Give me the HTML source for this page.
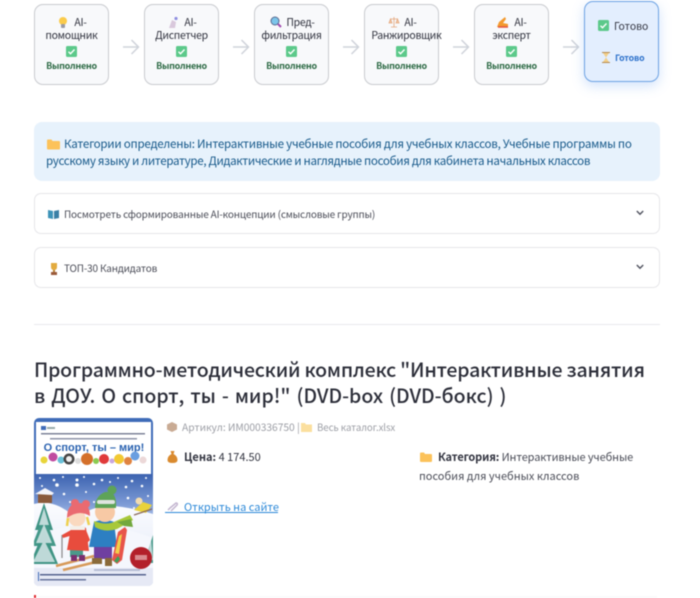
<!DOCTYPE html>
<html lang="ru"><head><meta charset="utf-8">
<style>
html,body{margin:0;padding:0;background:#fff;width:700px;height:598px;overflow:hidden}
body{position:relative;font-family:"Liberation Sans","Noto Sans CJK SC",sans-serif;color:#31333f}
#w{position:absolute;left:0;top:0;width:700px;height:598px;filter:blur(.4px);overflow:hidden}
.a,.t{position:absolute}
.t{white-space:nowrap}
.f{font-family:"Noto Sans CJK SC","Liberation Sans",sans-serif}
.card{position:absolute;top:4px;width:73px;height:79px;border:1.5px solid #c9cbcf;border-radius:9px;background:#f8f9fb}
.l{position:absolute;left:-10px;right:-10px;text-align:center;font-size:10.5px;letter-spacing:-.3px;line-height:13px;white-space:nowrap;color:#31333f}
.d{position:absolute;left:-10px;right:-10px;text-align:center;font-size:9px;letter-spacing:-.3px;font-weight:700;line-height:12px;color:#2e6b46;top:55px;white-space:nowrap}
.ck{position:absolute;left:31px;top:41px}
.arr{position:absolute;top:38px}
.exp{position:absolute;left:34px;width:624px;height:39px;border:1.5px solid #e6e6e9;border-radius:7px;background:#fff}
svg{display:block}
</style></head><body><div id="w">

<div class="card f" style="left:34px">
<svg class="a" style="left:23px;top:11px" width="10" height="13" viewBox="0 0 10 13"><circle cx="5" cy="5" r="4" fill="#fbcb4a"/><rect x="3" y="8" width="4" height="4" rx="1" fill="#9a9aa5"/></svg>
<div class="l" style="top:11px"><span style="padding-left:18px">AI-</span><br>помощник</div>
<svg class="ck" width="11" height="11"><rect width="11" height="11" rx="1.5" fill="#5cc98a"/><path d="M2.500 5.700l2 2 4-4.200" stroke="#fff" stroke-width="1.400" fill="none"/></svg>
<div class="d">Выполнено</div></div>

<svg class="arr" style="left:122px" width="18" height="18" viewBox="0 0 18 18"><path d="M1 9h15M9.500 2l7 7-7 7" fill="none" stroke="#cfd3da" stroke-width="1.500"/></svg>

<div class="card f" style="left:144px">
<svg class="a" style="left:23px;top:11px" width="11" height="13" viewBox="0 0 11 13"><path d="M1 12L4 4l4 2-1 6z" fill="#d9c8dc"/><circle cx="8" cy="2.500" r="1.600" fill="#8f8fe0"/></svg>
<div class="l" style="top:11px"><span style="padding-left:18px">AI-</span><br>Диспетчер</div>
<svg class="ck" width="11" height="11"><rect width="11" height="11" rx="1.5" fill="#5cc98a"/><path d="M2.500 5.700l2 2 4-4.200" stroke="#fff" stroke-width="1.400" fill="none"/></svg>
<div class="d">Выполнено</div></div>

<svg class="arr" style="left:232px" width="18" height="18" viewBox="0 0 18 18"><path d="M1 9h15M9.500 2l7 7-7 7" fill="none" stroke="#cfd3da" stroke-width="1.500"/></svg>

<div class="card f" style="left:254px">
<svg class="a" style="left:15px;top:11px" width="12" height="12" viewBox="0 0 12 12"><circle cx="5" cy="5" r="4" fill="#7cc5ea" stroke="#5a6a90"/><path d="M8 8l3 3" stroke="#a14bb0" stroke-width="2"/></svg>
<div class="l" style="top:11px"><span style="padding-left:18px">Пред-</span><br>фильтрация</div>
<svg class="ck" width="11" height="11"><rect width="11" height="11" rx="1.5" fill="#5cc98a"/><path d="M2.500 5.700l2 2 4-4.200" stroke="#fff" stroke-width="1.400" fill="none"/></svg>
<div class="d">Выполнено</div></div>

<svg class="arr" style="left:342px" width="18" height="18" viewBox="0 0 18 18"><path d="M1 9h15M9.500 2l7 7-7 7" fill="none" stroke="#cfd3da" stroke-width="1.500"/></svg>

<div class="card f" style="left:364px">
<svg class="a" style="left:23px;top:11px" width="12" height="13" viewBox="0 0 12 13"><path d="M6 1v10M2 3h8M1 7l1.500-4L4 7zM8 7l1.500-4L11 7zM3 11h6" fill="#f3c9a8" stroke="#e4a67c" stroke-width=".8"/></svg>
<div class="l" style="top:11px"><span style="padding-left:18px">AI-</span><br><span style="position:relative;left:5px">Ранжировщик</span></div>
<svg class="ck" width="11" height="11"><rect width="11" height="11" rx="1.5" fill="#5cc98a"/><path d="M2.500 5.700l2 2 4-4.200" stroke="#fff" stroke-width="1.400" fill="none"/></svg>
<div class="d">Выполнено</div></div>

<svg class="arr" style="left:452px" width="18" height="18" viewBox="0 0 18 18"><path d="M1 9h15M9.500 2l7 7-7 7" fill="none" stroke="#cfd3da" stroke-width="1.500"/></svg>

<div class="card f" style="left:474px">
<svg class="a" style="left:22px;top:11px" width="12" height="12" viewBox="0 0 12 12"><path d="M0 11l2-5 6-5 1 2-3 4 5 1v3z" fill="#f39a2e"/><path d="M1 11h10" stroke="#e5533d" stroke-width="1.500"/></svg>
<div class="l" style="top:11px"><span style="padding-left:18px">AI-</span><br>эксперт</div>
<svg class="ck" width="11" height="11"><rect width="11" height="11" rx="1.5" fill="#5cc98a"/><path d="M2.500 5.700l2 2 4-4.200" stroke="#fff" stroke-width="1.400" fill="none"/></svg>
<div class="d">Выполнено</div></div>

<svg class="arr" style="left:562px" width="18" height="18" viewBox="0 0 18 18"><path d="M1 9h15M9.500 2l7 7-7 7" fill="none" stroke="#cfd3da" stroke-width="1.500"/></svg>

<div class="card f" style="left:584px;top:1px;background:#e3eefe;border-color:#6ea3e4;box-shadow:0 4px 12px rgba(90,150,240,.28)">
<svg class="a" style="left:13px;top:18px" width="11" height="11"><rect width="11" height="11" rx="1.5" fill="#5cc98a"/><path d="M2.500 5.700l2 2 4-4.200" stroke="#fff" stroke-width="1.400" fill="none"/></svg>
<div class="t" style="left:29px;top:16px;font-size:10.400px;line-height:15px">Готово</div>
<svg class="a" style="left:17px;top:50px" width="8" height="11" viewBox="0 0 8 11"><path d="M0 .5h8M0 10.500h8" stroke="#b58a50"/><path d="M1 1h6L4 5.500 7 10H1l3-4.500z" fill="#f2cf8a"/></svg>
<div class="t" style="left:30px;top:49px;font-size:8.800px;letter-spacing:-.15px;font-weight:700;line-height:13px;color:#2f73cc">Готово</div>
</div>

<div class="a" style="left:34px;top:122px;width:626px;height:59px;background:#e7f2fc;border-radius:8px"></div>
<svg class="a" style="left:47px;top:139px" width="13" height="11" viewBox="0 0 13 11"><path d="M0 1.500Q0 .5 1 .5h3.500l1 1.500H12q1 0 1 1v6.500q0 1-1 1H1q-1 0-1-1z" fill="#fcc25a"/></svg>
<div class="t f" style="left:64px;top:135px;font-size:11.600px;letter-spacing:-.25px;line-height:18px;color:#17598a">Категории определены: Интерактивные учебные пособия для учебных классов, Учебные программы по</div>
<div class="t f" style="left:46px;top:152px;font-size:11.600px;letter-spacing:-.33px;line-height:18px;color:#17598a">русскому языку и литературе, Дидактические и наглядные пособия для кабинета начальных классов</div>

<div class="exp" style="top:193px"></div>
<svg class="a" style="left:48px;top:209px" width="11" height="10" viewBox="0 0 11 10"><path d="M0 1l5 1v8L0 9z" fill="#3d93b8"/><path d="M11 1L6 2v8l5-1z" fill="#3a7fa5"/></svg>
<div class="t f" style="left:64px;top:206px;font-size:10px;letter-spacing:-.17px;line-height:16px;color:#4a4c57">Посмотреть сформированные AI-концепции (смысловые группы)</div>
<svg class="a" style="left:636px;top:210px" width="8" height="6" viewBox="0 0 8 6"><path d="M.8 1l3.200 3.200L7.200 1" fill="none" stroke="#50525e" stroke-width="1.400"/></svg>

<div class="exp" style="top:247px"></div>
<svg class="a" style="left:49px;top:263px" width="10" height="12" viewBox="0 0 10 12"><path d="M2 0h6v4Q8 7 5 7T2 4z" fill="#e3ab3f"/><path d="M5 7v2" stroke="#b5823a" stroke-width="2"/><rect x="2" y="9" width="6" height="3" fill="#9a5a3a"/></svg>
<div class="t f" style="left:64px;top:260px;font-size:10px;letter-spacing:-.17px;line-height:16px;color:#4a4c57">ТОП-30 Кандидатов</div>
<svg class="a" style="left:636px;top:264px" width="8" height="6" viewBox="0 0 8 6"><path d="M.8 1l3.200 3.200L7.200 1" fill="none" stroke="#50525e" stroke-width="1.400"/></svg>

<div class="a" style="left:34px;top:324px;width:626px;height:1px;background:#e9e9ec"></div>

<div class="t f" style="left:34px;top:356px;font-size:19.500px;letter-spacing:-.2px;font-weight:500;line-height:26px;color:#2b2d38">Программно-методический комплекс "Интерактивные занятия</div>
<div class="t f" style="left:34px;top:382px;font-size:19.500px;word-spacing:1.600px;font-weight:500;line-height:26px;color:#2b2d38">в ДОУ. О спорт, ты - мир!" (DVD-box (DVD-бокс) )</div>

<svg class="a" style="left:34px;top:418px;filter:blur(.35px)" width="119" height="168" viewBox="0 0 119 168">
<defs>
<linearGradient id="sky" x1="0" y1="0" x2="0" y2="1"><stop offset="0" stop-color="#3c63b0"/><stop offset=".6" stop-color="#7d9bd6"/><stop offset="1" stop-color="#bccdee"/></linearGradient>
<linearGradient id="snow" x1="0" y1="0" x2="0" y2="1"><stop offset="0" stop-color="#fbfcff"/><stop offset="1" stop-color="#dfe6f6"/></linearGradient>
<clipPath id="cp"><rect width="119" height="168" rx="5"/></clipPath>
</defs>
<g clip-path="url(#cp)">
<rect width="119" height="168" fill="#3f6cb8"/>
<rect x="2" y="4" width="115" height="52" fill="#fff"/>
<rect x="0" y="56" width="119" height="50" fill="url(#sky)"/>
<path d="M0 86Q20 80 42 100Q62 86 80 88Q100 90 119 96V168H0z" fill="url(#snow)"/>
<path d="M20 112Q60 98 119 120V168H0V130z" fill="#f5f7fd"/>
<rect x="0" y="150" width="119" height="18" fill="#e6e9f5"/>
<rect x="7" y="8" width="5" height="4" fill="#3f6cb8"/><rect x="13" y="9" width="8" height="2" fill="#9aa"/>
<rect x="7" y="15" width="104" height="1.500" fill="#7e8398"/>
<rect x="16" y="20" width="87" height="1.500" fill="#8f94a8"/>
<text x="60" y="33" text-anchor="middle" font-family="Liberation Sans" font-size="11" font-weight="700" fill="#2a62b0">О спорт, ты – мир!</text>
<circle cx="10" cy="42" r="3.500" fill="#e8d53a"/><circle cx="19" cy="39" r="4.500" fill="#c04aa0"/><circle cx="27" cy="42" r="3.500" fill="#6ac0d8"/><circle cx="35" cy="41" r="5.500" fill="#444"/><circle cx="35" cy="41" r="3" fill="#eee"/><circle cx="44" cy="43" r="3" fill="#ddd"/><circle cx="53" cy="41" r="6" fill="#d4702a"/><circle cx="62" cy="43" r="3" fill="#8acb50"/><circle cx="70" cy="41" r="5" fill="#e03a3a"/><circle cx="78" cy="43" r="2.500" fill="#c9a7dd"/><circle cx="85" cy="41" r="5" fill="#f2c933"/><circle cx="94" cy="43" r="4" fill="#e08340"/><circle cx="101" cy="38" r="4.500" fill="#6a9ee0"/><circle cx="109" cy="42" r="3.500" fill="#ecd8d8"/>
<g fill="#fff"><circle cx="6" cy="60" r="1"/><circle cx="20" cy="62" r="1.300"/><circle cx="29" cy="59" r="1"/><circle cx="43" cy="62" r="1.500"/><circle cx="50" cy="59" r="1"/><circle cx="68" cy="62" r="1.300"/><circle cx="84" cy="60" r="1"/><circle cx="98" cy="63" r="1.300"/><circle cx="112" cy="60" r="1"/><circle cx="23" cy="67" r="1.800"/><circle cx="43" cy="67" r="1.800"/><circle cx="60" cy="66" r="1.300"/><circle cx="76" cy="64" r="1"/><circle cx="92" cy="69" r="1.300"/><circle cx="108" cy="68" r="1.300"/><circle cx="8" cy="68" r="1"/><circle cx="30" cy="76" r="1.300"/><circle cx="52" cy="74" r="1"/><circle cx="36" cy="84" r="1"/><circle cx="94" cy="80" r="1.300"/><circle cx="114" cy="78" r="1"/><circle cx="60" cy="84" r="1"/><circle cx="100" cy="90" r="1"/></g>
<!-- house -->
<rect x="4" y="76" width="14" height="9" fill="#8a5a3a"/><path d="M1 76l10-6 9 5-2 2z" fill="#f4f4f8"/>
<!-- left tree -->
<path d="M10 85L1 112h18z" fill="#3f9484"/><path d="M10 97L-2 128h24z" fill="#45998a"/><path d="M10 112L-4 146h28z" fill="#3f9484"/>
<path d="M10 90l-5 17h10zM10 106l-8 19h16zM10 122l-11 22h22z" fill="#f0f4f8" opacity=".72"/>
<!-- right tree -->
<path d="M119 117l-9 28h9z" fill="#4a9a8c"/><path d="M117 122l-5 20h7z" fill="#f0f4f8" opacity=".7"/>
<!-- sledder -->
<path d="M100 92l9-8 9 3-6 8z" fill="#e9d23a"/><circle cx="105" cy="83" r="3.500" fill="#f2dcb0"/><path d="M100 97l18-6" stroke="#8a6a5a" stroke-width="1.200"/>
<!-- skis girl -->
<path d="M22 148l38-10M29 152l33-8" stroke="#d79a5a" stroke-width="2.500"/>
<path d="M28 117v23" stroke="#888" stroke-width="1.200"/>
<!-- girl -->
<rect x="36" y="131" width="13" height="8" fill="#4a9a8a"/>
<rect x="37" y="137" width="6" height="6" fill="#7a2f70"/><rect x="45" y="137" width="6" height="6" fill="#7a2f70"/>
<path d="M37 110l-4 22 22 1-3-23q-7-4-15 0z" fill="#e84c3d"/><path d="M37 112l-9 5 1 3 10-3zM52 112l4 10-3 3-4-9z" fill="#e84c3d"/>
<circle cx="43" cy="100" r="8.500" fill="#fad9bf"/>
<path d="M33 100q0-15 12-15 11 0 11 13-11-7-23 2z" fill="#ea6a70"/>
<circle cx="41" cy="85" r="4" fill="#ea6a70"/><circle cx="52" cy="86" r="4" fill="#ea6a70"/>
<path d="M34 100l-1 8M53 99l2 8" stroke="#eed04f" stroke-width="2.500"/>
<path d="M36 108h15v4H36z" fill="#f4f0ea"/>
<!-- boy -->
<rect x="60" y="128" width="18" height="13" fill="#6f3fa0"/>
<rect x="58" y="140" width="10" height="6" fill="#8a6a3a"/><rect x="71" y="140" width="7" height="8" fill="#8a6a3a"/>
<path d="M60 104l-5 25h28l-3-25q-10-4-20 0z" fill="#2d7fc2"/>
<circle cx="71" cy="94" r="10" fill="#f7c9a5"/>
<path d="M61 90q0-12 10-16l6 0q6 4 5 16z" fill="#5ea358"/>
<circle cx="78" cy="72" r="4.500" fill="#5ea358"/>
<rect x="63" y="82" width="18" height="4" rx="2" fill="#dfe4e0"/>
<path d="M60 103q13 5 22 0l14-6 3 5-16 9q-12 4-22-2z" fill="#a8c83a"/><path d="M83 104l14-3 2 8-9-1z" fill="#72a83e"/>
<!-- board -->
<path d="M78 142l6-28 7-5 2 3-5 30-5 4z" fill="#e8544a"/><path d="M81 135l4-17 3-2-3 20z" fill="#f2d04a"/><path d="M80 143l4-5 2 3-3 4z" fill="#3fa05a"/>
<!-- badge -->
<circle cx="107" cy="140" r="11" fill="#b3202a"/><rect x="101" y="137" width="12" height="5" fill="#d98a8e"/>
<rect x="60" y="151" width="46" height="2" fill="#b6bdd4"/>
<rect x="4" y="154" width="1" height="9" fill="#3f6cb8"/>
<rect x="6" y="156" width="106" height="1.500" fill="#55628f"/><rect x="6" y="161" width="46" height="1.500" fill="#66729c"/>
</g>
</svg>

<svg class="a" style="left:167px;top:422px" width="10" height="10" viewBox="0 0 10 10"><path d="M5 0l5 2.500v5L5 10 0 7.500v-5z" fill="#c9ab94"/></svg>
<div class="t f" style="left:182px;top:419px;font-size:10.300px;letter-spacing:-.05px;line-height:16px;color:#9c9ea5">Артикул: ИМ000336750 | </div>
<svg class="a" style="left:301px;top:422px" width="11" height="10" viewBox="0 0 11 10"><path d="M0 1h4l1 1.500h6V10H0z" fill="#fbdf9e"/></svg>
<div class="t f" style="left:317px;top:419px;font-size:9.700px;letter-spacing:-.08px;line-height:16px;color:#9c9ea5">Весь каталог.xlsx</div>

<svg class="a" style="left:167px;top:451px" width="11" height="12" viewBox="0 0 11 12"><path d="M3.500 0h4L6.500 3q4 2 4 6 0 3-5 3t-5-3q0-4 4-6z" fill="#d98a2f"/></svg>
<div class="t f" style="left:184px;top:449px;font-size:11px;line-height:16px;color:#31333f"><b>Цена:</b> 4 174.50</div>

<svg class="a" style="left:420px;top:452px" width="12" height="10" viewBox="0 0 12 10"><path d="M0 1.500Q0 .5 1 .5h3l1 1.500h6q1 0 1 1V9q0 1-1 1H1q-1 0-1-1z" fill="#fcc25a"/></svg>
<div class="t f" style="left:438px;top:449px;font-size:11px;letter-spacing:-.12px;line-height:16px;color:#4a4c57"><b style="color:#31333f">Категория:</b> Интерактивные учебные</div>
<div class="t f" style="left:419px;top:468px;font-size:11px;line-height:16px;color:#4a4c57">пособия для учебных классов</div>

<svg class="a" style="left:166px;top:502px" width="13" height="10" viewBox="0 0 13 10"><path d="M2 8l3-3M5 9L11 3Q12 1 10 1L4 6" fill="none" stroke="#c3b5cf" stroke-width="1.500"/></svg>
<div class="a" style="left:165px;top:512px;width:113px;height:1px;background:#2b88d8"></div>
<div class="t f" style="left:184px;top:499px;font-size:11px;line-height:16px;color:#2b88d8">Открыть на сайте</div>

<div class="a" style="left:37px;top:596px;width:620px;height:2px;background:#fafafb"></div>
<div class="a" style="left:34px;top:595px;width:2px;height:3px;background:#e0282e"></div>

</div></body></html>
